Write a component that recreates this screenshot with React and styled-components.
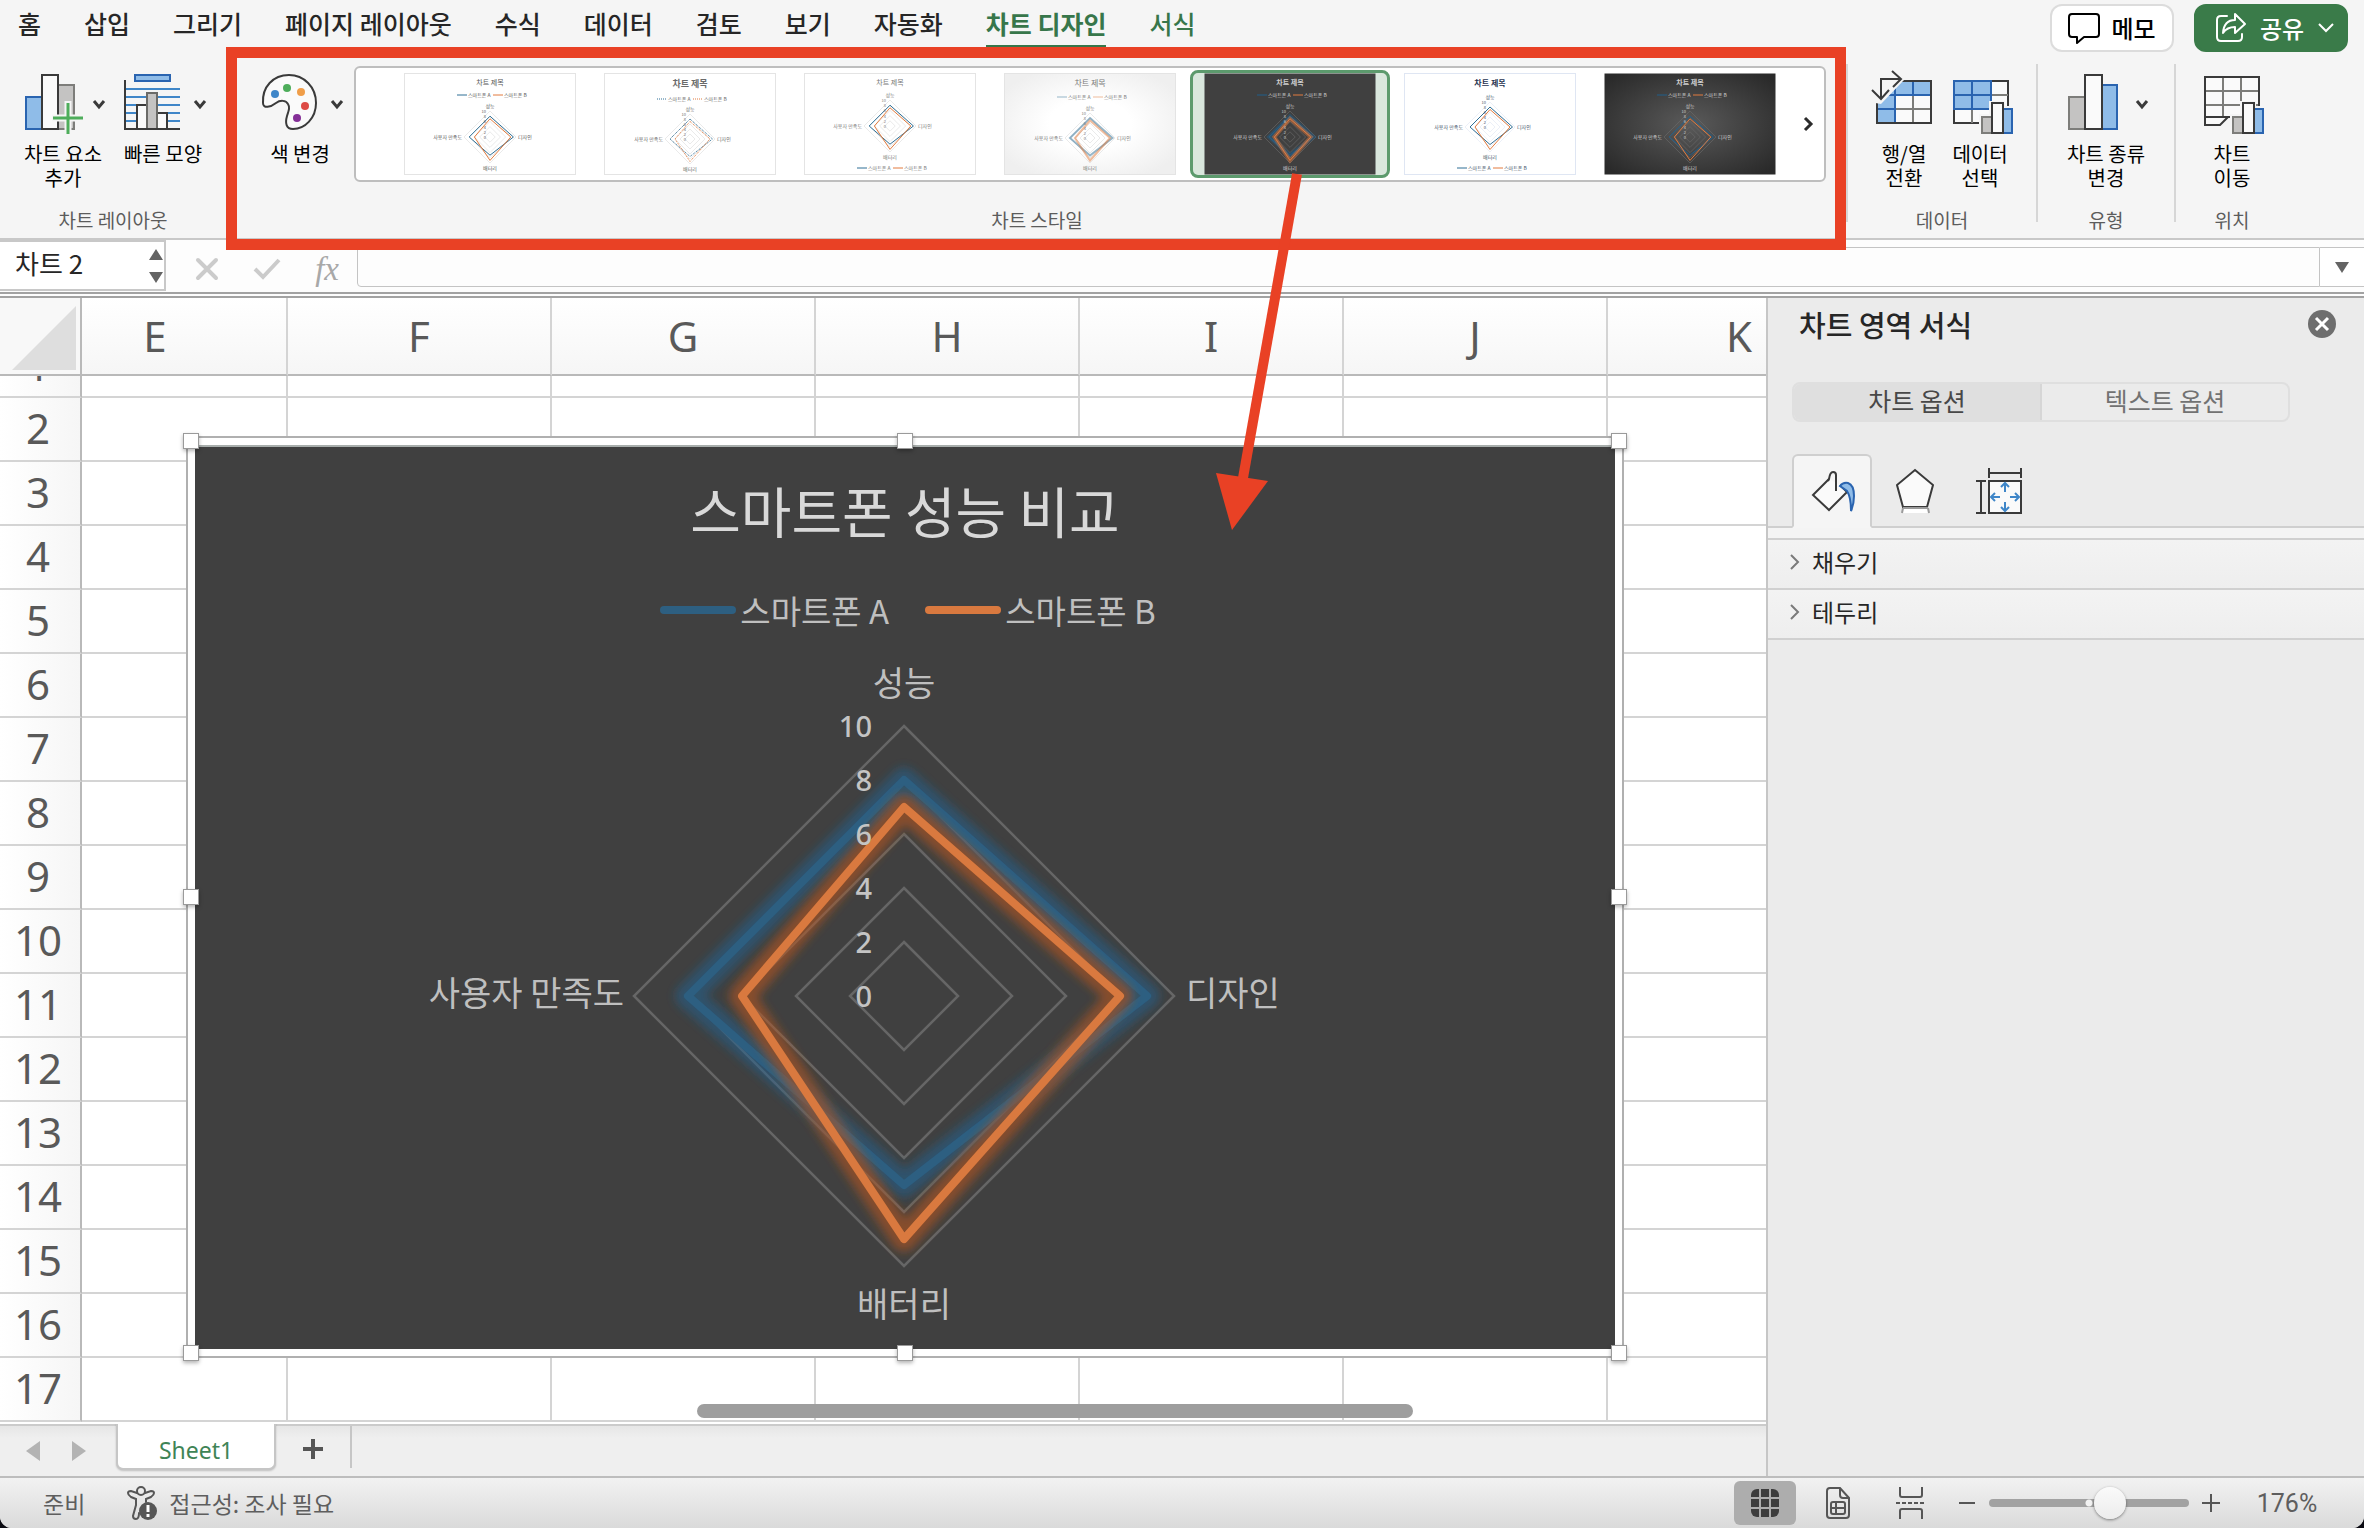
import React, { useState } from 'react';
import styled, { createGlobalStyle, css } from 'styled-components';

const GlobalStyle = createGlobalStyle`
    * {
        box-sizing: border-box;
    }

    body {
        margin: 0;
        background: #0b0b12;
        font-family: 'Noto Sans CJK KR', 'Noto Sans', sans-serif;
        color: #262626;
    }

    button,
    input {
        font: inherit;
        color: inherit;
    }

    button {
        padding: 0;
        border: 0;
        background: none;
        cursor: pointer;
    }

    svg {
        display: block;
        overflow: visible;
        flex: none;
    }
`;

const Window = styled.div`
    display: flex;
    flex-direction: column;
    height: 100vh;
    min-width: 1700px;
    overflow: hidden;
    background: #f5f5f5;
    border-radius: 0 0 12px 12px;
`;

/* top bar */

const TopBar = styled.header`
    display: flex;
    justify-content: space-between;
    height: 56px;
    flex: none;
`;

const Tabs = styled.nav`
    display: flex;
    gap: 43px;
    height: 48px;
    padding-left: 18px;
`;

const Tab = styled.a`
    height: 48px;
    padding-top: 5px;
    font-size: 25px;
    line-height: 36px;
    font-weight: ${({ $active }) => ($active ? 700 : 500)};
    color: ${({ $green }) => ($green ? '#37764a' : '#262626')};
    border-bottom: 3px solid ${({ $active }) => ($active ? '#37764a' : 'transparent')};
    text-decoration: none;
    white-space: nowrap;
`;

const Actions = styled.div`
    display: flex;
    gap: 20px;
    padding: 4px 16px 0 0;
`;

const PillButton = styled.button`
    display: flex;
    align-items: center;
    justify-content: center;
    gap: 11px;
    width: ${({ $primary }) => ($primary ? 154 : 124)}px;
    height: 48px;
    border-radius: 12px;
    font-size: 24px;
    line-height: 36px;
    font-weight: 500;
    color: #000;
    background: #fff;
    border: 2px solid #dcdcdc;

    ${({ $primary }) =>
        $primary &&
        css`
            gap: 14px;
            padding-left: 8px;
            color: #fff;
            background: #3a7b49;
            border-color: #3a7b49;
        `}
`;

/* ribbon */

const Ribbon = styled.section`
    display: flex;
    flex: none;
    height: 184px;
    padding-right: 76px;
    border-bottom: 2px solid #c8c8c8;
`;

const Group = styled.div`
    position: relative;
    display: flex;
    flex-direction: column;
    justify-content: space-between;
    width: ${({ $width }) => $width}px;
    flex: ${({ $grow }) => ($grow ? '1 1 0' : 'none')};
    min-width: 0;
    padding: 10px 0 6px;
`;

const GroupItems = styled.div`
    display: flex;
    justify-content: center;
    padding: ${({ $wide }) => ($wide ? '0 20px 0 22px' : 0)};
`;

const GroupLabel = styled.div`
    font-size: 19px;
    line-height: 24px;
    text-align: center;
    color: #5c5c5c;
`;

const Divider = styled.div`
    width: 2px;
    margin: 8px 0 16px;
    background: #d6d6d6;
`;

const ToolButton = styled.button`
    display: flex;
    flex-direction: column;
    align-items: center;
    gap: 6px;
    width: ${({ $width }) => $width}px;
    padding-top: 6px;
    font-size: 20px;
    line-height: 24px;
    color: #000;
    flex: none;
`;

const ToolIcon = styled.span`
    display: flex;
    align-items: center;
    gap: 10px;
    padding-left: ${({ $menu }) => ($menu ? 4 : 0)}px;
`;

const ToolLabel = styled.span`
    white-space: pre-line;
`;

const Gallery = styled.div`
    display: flex;
    align-items: center;
    justify-content: space-between;
    flex: 1;
    height: 116px;
    padding: 0 4px 0 34px;
    margin-left: 4px;
    background: #fff;
    border: 2px solid #bebebe;
    border-radius: 6px;
`;

const StyleList = styled.div`
    display: flex;
    flex: 1;
    justify-content: space-between;
    max-width: 1400px;
`;

const StyleButton = styled.button`
    display: flex;
    align-items: center;
    justify-content: center;
    width: 200px;
    height: 108px;
    border: 3px solid ${({ $selected }) => ($selected ? '#5c9a6d' : 'transparent')};
    border-radius: 8px;
    background: ${({ $selected }) => ($selected ? '#d9e7dd' : 'transparent')};
`;

const GalleryNext = styled.button`
    display: flex;
    align-items: center;
    justify-content: center;
    width: 24px;
    height: 40px;
`;

const Highlight = styled.div`
    position: absolute;
    z-index: 5;
    top: -9px;
    right: 0;
    bottom: -12px;
    left: -2px;
    border: 11px solid #e94125;
    pointer-events: none;
`;

const PointerArrow = styled.svg`
    position: absolute;
    z-index: 6;
    top: 116px;
    left: 987px;
    pointer-events: none;
`;

/* formula bar */

const FormulaBar = styled.section`
    display: flex;
    flex: none;
    height: 58px;
    background: #fdfdfd;
    border-bottom: 6px double #a2a2a2;
`;

const NameBox = styled.div`
    display: flex;
    width: 166px;
    height: 51px;
    background: #fff;
    border: solid #c8c8c8;
    border-width: 2px 2px 2px 0;

    input {
        flex: 1;
        min-width: 0;
        padding: 0 0 6px 15px;
        border: 0;
        outline: 0;
        background: none;
        font-size: 26px;
    }
`;

const Stepper = styled.button`
    display: flex;
    align-items: center;
    width: 15px;
`;

const FormulaActions = styled.div`
    display: flex;
    align-items: center;
    justify-content: space-between;
    width: 191px;
    padding: 6px 18px 0 30px;
`;

const Fx = styled.button`
    font-family: 'Liberation Serif', serif;
    font-style: italic;
    font-size: 33px;
    line-height: 36px;
    color: #a8a8a8;
`;

const FormulaInput = styled.input`
    flex: 1;
    height: 40px;
    margin-top: 7px;
    padding: 0 12px;
    border: 1px solid #c4c4c4;
    border-bottom-left-radius: 4px;
    outline: 0;
    background: #fdfdfd;
    font-size: 24px;
`;

const ExpandButton = styled.button`
    display: flex;
    align-items: center;
    justify-content: center;
    width: 44px;
    height: 40px;
    margin-top: 7px;
    background: #fff;
    border: solid #c4c4c4;
    border-width: 1px 0;
`;

/* sheet */

const Main = styled.main`
    display: flex;
    flex: 1;
    min-height: 0;
`;

const SheetArea = styled.section`
    display: flex;
    flex-direction: column;
    flex: 1;
    min-width: 0;
`;

const GridViewport = styled.div`
    position: relative;
    flex: 1;
    min-height: 0;
    overflow: hidden;
    background: #fff;
`;

const Grid = styled.table`
    width: 1872px;
    table-layout: fixed;
    border-collapse: separate;
    border-spacing: 0;
    font-family: 'Noto Sans', sans-serif;
    font-size: 42px;
    line-height: 42px;
    color: #595959;

    th,
    td {
        padding: 0;
        border: solid #d4d4d4;
        border-width: 0 2px 2px 0;
    }

    th {
        font-weight: 400;
    }
`;

const ColumnHead = styled.th`
    height: 78px;
    background: linear-gradient(#fff, #f6f6f6);

    && {
        padding-right: ${({ $clipped }) => ($clipped ? 58 : 0)}px;
        border-bottom-color: #b9b9b9;
    }
`;

const Corner = styled.th`
    height: 78px;
    background: #f8f8f8;

    && {
        padding: 8px 4px 4px 12px;
        border-color: #b9b9b9;
    }
`;

const RowHead = styled.th`
    height: 64px;
    background: linear-gradient(90deg, #fff, #f6f6f6);

    && {
        padding: 0 4px 2px 0;
        border-right-color: #b9b9b9;
    }
`;

const ScrolledRowHead = styled(RowHead)`
    height: 22px;

    && {
        padding: 0 4px 0 0;
    }

    div {
        display: flex;
        align-items: flex-end;
        justify-content: center;
        height: 20px;
        padding-bottom: 10px;
        overflow: hidden;
    }
`;

const ChartObject = styled.div`
    position: absolute;
    top: 138px;
    left: 186px;
    width: 1438px;
    height: 922px;
    padding: 7px;
    background: #fff;
    border: 2px solid #b0b0b0;
`;

const ChartArea = styled.div`
    display: flex;
    flex-direction: column;
    align-items: center;
    height: 100%;
    padding-top: 24px;
    background: #404040;
    border-top: 2px solid #a8aeac;
    overflow: hidden;
`;

const Handle = styled.span`
    position: absolute;
    top: ${({ $y }) => $y};
    left: ${({ $x }) => $x};
    width: 16px;
    height: 16px;
    margin: -8px;
    background: #fff;
    border: 1px solid #9a9a9a;
    box-shadow: 0 2px 4px rgba(0, 0, 0, 0.3);
`;

const ChartTitle = styled.h2`
    margin: 0;
    font-size: 55px;
    line-height: 76px;
    font-weight: 400;
    color: #d9d9d9;
`;

const Legend = styled.ul`
    display: flex;
    gap: 36px;
    margin: 41px 0 0;
    padding: 0 0 0 6px;
    list-style: none;
    font-size: 33px;
    line-height: 44px;
    color: #bfbfbf;

    li {
        display: flex;
        align-items: center;
        gap: 4px;
    }
`;

const LegendKey = styled.span`
    width: 76px;
    height: 8px;
    border-radius: 4px;
    background: ${({ $color }) => $color};
`;

const AxisText = styled.text`
    font-size: 34px;
    fill: #bfbfbf;
`;

const ScaleText = styled.text`
    font-family: 'Noto Sans', sans-serif;
    font-size: 29px;
    font-weight: 500;
    text-anchor: end;
    fill: #c4c4c4;
`;

const ScrollThumb = styled.div`
    position: absolute;
    bottom: 6px;
    left: 697px;
    width: 716px;
    height: 14px;
    border-radius: 7px;
    background: #9e9e9e;
`;

const SheetBar = styled.div`
    display: flex;
    flex: none;
    height: 52px;
    border-top: 2px solid #cbcbcb;
    background: linear-gradient(#e6e6e6, #efefef 12px);
`;

const SheetNav = styled.div`
    display: flex;
    align-items: center;
    justify-content: space-between;
    width: 116px;
    padding: 0 30px 0 26px;
`;

const SheetTab = styled.button`
    width: 160px;
    height: 47px;
    margin-top: -3px;
    padding-top: 8px;
    background: #fff;
    border: solid #c6c6c6;
    border-width: 0 2px 2px;
    border-radius: 0 0 7px 7px;
    box-shadow: 0 1px 2px rgba(0, 0, 0, 0.2);
    font-family: 'Noto Sans', sans-serif;
    font-size: 23px;
    color: #3f8456;
`;

const AddSheet = styled.button`
    display: flex;
    align-items: center;
    justify-content: center;
    width: 76px;
    height: 42px;
    padding-top: 4px;
    border-right: 2px solid #c6c6c6;
`;

/* format pane */

const Pane = styled.aside`
    width: 598px;
    flex: none;
    border-left: 2px solid #c6c6c6;
    background: #ebebeb;
`;

const PaneHead = styled.div`
    display: flex;
    justify-content: space-between;
    align-items: center;
    padding: 6px 28px 38px 31px;

    h3 {
        margin: 0;
        font-size: 29px;
        line-height: 40px;
        font-weight: 500;
    }
`;

const CloseButton = styled.button`
    display: flex;
    align-items: center;
    justify-content: center;
    width: 28px;
    height: 28px;
    border-radius: 50%;
    background: #6e6e6e;
`;

const Segments = styled.div`
    display: flex;
    width: 498px;
    height: 40px;
    margin-left: 24px;
    border: 2px solid #dfdfdf;
    border-radius: 8px;
    overflow: hidden;
`;

const Segment = styled.button`
    flex: 1;
    padding-bottom: 4px;
    font-size: 25px;
    line-height: 32px;
    color: ${({ $active }) => ($active ? '#484848' : '#727272')};
    background: ${({ $active }) => ($active ? '#dfdfdf' : 'transparent')};

    & + & {
        border-left: 2px solid #d6d6d6;
    }
`;

const PaneTabs = styled.div`
    display: flex;
    align-items: flex-end;
    height: 106px;
    padding-left: 24px;
    border-bottom: 2px solid #cfcfcf;
`;

const PaneTab = styled.button`
    display: flex;
    align-items: center;
    justify-content: center;
    width: ${({ $active }) => ($active ? 80 : 84)}px;
    height: 74px;
    margin-bottom: -2px;
    padding-left: 2px;
    border: 2px solid transparent;

    ${({ $active }) =>
        $active &&
        css`
            background: #f5f5f5;
            border-color: #cfcfcf #cfcfcf #f5f5f5;
            border-radius: 6px 6px 0 0;
        `}
`;

const Sections = styled.div`
    padding-top: 10px;
    background: #f4f4f4;
`;

const SectionButton = styled.button`
    display: flex;
    align-items: center;
    gap: 12px;
    width: 100%;
    height: 50px;
    padding: 0 0 4px 22px;
    border-top: 2px solid #d0d0d0;
    background: linear-gradient(#f3f3f3, #eeeeee);
    font-size: 24px;
    line-height: 36px;

    &:last-child {
        height: 52px;
        border-bottom: 2px solid #d0d0d0;
    }
`;

/* status bar */

const StatusBar = styled.footer`
    display: flex;
    align-items: center;
    justify-content: space-between;
    flex: none;
    height: 52px;
    padding: 0 46px 0 43px;
    border-top: 2px solid #bdbdbd;
    background: linear-gradient(#f2f2f2, #dadada);
    font-size: 23px;
    line-height: 32px;
    color: #5e5e5e;
`;

const StatusGroup = styled.div`
    display: flex;
    align-items: center;
    gap: ${({ $gap }) => $gap}px;
`;

const ViewButton = styled.button`
    display: flex;
    align-items: center;
    justify-content: center;
    width: 62px;
    height: 44px;
    border-radius: 6px;
    background: ${({ $active }) => ($active ? '#adadad' : 'transparent')};
`;

const ZoomButton = styled.button`
    display: flex;
    align-items: center;
    justify-content: center;
    width: 28px;
    height: 32px;
`;

const ZoomSlider = styled.input`
    width: 200px;
    height: 34px;
    margin: 0;
    appearance: none;
    background: none;

    &::-webkit-slider-runnable-track {
        height: 8px;
        border-radius: 4px;
        background: radial-gradient(circle at 50% 50%, #f2f2f2 3px, #a2a2a2 4px);
    }

    &::-webkit-slider-thumb {
        appearance: none;
        width: 32px;
        height: 32px;
        margin-top: -12px;
        border-radius: 50%;
        background: linear-gradient(#fafafa, #ececec);
        box-shadow: 0 1px 3px rgba(0, 0, 0, 0.45);
    }
`;

const ZoomValue = styled.button`
    width: 62px;
    padding-top: 2px;
    font-family: Roboto, sans-serif;
    font-size: 25px;
    white-space: nowrap;
`;

const BLUE = '#8fbce8';
const BLUE_LINE = '#2a64b0';
const DARK = '#3a3a3a';
const GREY = '#c4c3c2';
const GREY_LINE = '#7d7d7a';

const Chevron = () => (
    <svg width="12" height="9" viewBox="0 0 12 9">
        <path d="M1 1l5 6 5-6" fill="none" stroke={DARK} strokeWidth="3" />
    </svg>
);

const Triangle = ({ direction, width = 14, height = 11, color = '#646464' }) => {
    const points = {
        up: `0,${height} ${width},${height} ${width / 2},0`,
        down: `0,0 ${width},0 ${width / 2},${height}`,
        left: `${width},0 ${width},${height} 0,${height / 2}`,
        right: `0,0 0,${height} ${width},${height / 2}`,
    };

    return (
        <svg width={width} height={height}>
            <polygon points={points[direction]} fill={color} />
        </svg>
    );
};

const AddElementIcon = () => (
    <svg width="58" height="64" strokeWidth="2">
        <rect x="1" y="25" width="16" height="32" fill={BLUE} stroke={BLUE_LINE} />
        <rect x="33" y="13" width="16" height="44" fill={GREY} stroke={GREY_LINE} />
        <rect x="17" y="3" width="16" height="54" fill="#fafafa" stroke={DARK} />
        <path d="M43 29v34M27 46h33" stroke="#f5f5f5" strokeWidth="7" />
        <path d="M43 31v31M28 46h30" stroke="#4ead5b" strokeWidth="3" />
    </svg>
);

const QuickLayoutIcon = () => (
    <svg width="60" height="64" strokeWidth="2" fill="none">
        <rect x="11" y="3" width="35" height="6" fill={BLUE} stroke={BLUE_LINE} />
        <path d="M2 17h54M2 25h54M2 33h54M2 41h54M2 49h54" stroke="#3f86c8" />
        <rect x="13" y="33" width="10" height="24" fill="#fafafa" stroke={DARK} />
        <rect x="33" y="41" width="10" height="16" fill="#fafafa" stroke={DARK} />
        <rect x="23" y="21" width="10" height="36" fill={GREY} stroke="#6b6b68" />
        <path d="M1 8v49h55" stroke={DARK} />
    </svg>
);

const PaletteIcon = () => (
    <svg width="60" height="64">
        <path
            d="M2 31C1 15 12 3 28 3c15 0 27 12 27 28 0 15-11 26-23 26-7 0-8-6-6-13 2-6 3-9 1-12-2-4-8-4-12-1-5 4-13 6-13 0z"
            fill="#fafafa"
            stroke={DARK}
            strokeWidth="2"
        />
        <circle cx="14" cy="22" r="4" fill="#3f86c8" />
        <circle cx="26" cy="16" r="4" fill="#4ead5b" />
        <circle cx="40" cy="20" r="4" fill="#f09e49" />
        <circle cx="44" cy="34" r="4" fill="#dd4a45" />
        <circle cx="36" cy="46" r="4" fill="#842f97" />
    </svg>
);

const SmallBars = () => (
    <g strokeWidth="2">
        <path d="M26 42h10V29h16v5h11v30H26z" fill="#f5f5f5" />
        <rect x="29" y="45" width="10" height="16" fill={GREY} stroke={GREY_LINE} />
        <rect x="50" y="37" width="9" height="24" fill={BLUE} stroke={BLUE_LINE} />
        <rect x="39" y="31" width="11" height="30" fill="#fafafa" stroke={DARK} />
    </g>
);

const SwitchIcon = () => (
    <svg width="64" height="64" strokeWidth="2" fill="none">
        <rect x="5" y="9" width="54" height="42" fill="#fafafa" />
        <path d="M5 9h54v14H23v28H5z" fill={BLUE} />
        <path d="M41 23v28M23 37h36" stroke={GREY_LINE} />
        <path d="M23 9v42M41 9v14M5 23h54M5 37h18" stroke={BLUE_LINE} />
        <path d="M5 9h54v42H5z" stroke={DARK} />
        <path d="M-2 30V-2h34v10L9 32z" fill="#f5f5f5" />
        <path d="M9 27V7h20M20-1l9 8-8 8M0 18l9 9 8-9" stroke={DARK} />
    </svg>
);

const SelectDataIcon = () => (
    <svg width="54" height="64" strokeWidth="2" fill="none">
        <rect x="1" y="9" width="54" height="42" fill="#fafafa" stroke={DARK} />
        <path d="M38 23h17M19 37v14M38 37h17" stroke={GREY_LINE} />
        <rect x="1" y="9" width="37" height="28" fill={BLUE} stroke={BLUE_LINE} />
        <path d="M19 9v28M1 23h37" stroke={BLUE_LINE} />
        <SmallBars />
    </svg>
);

const ChartTypeIcon = () => (
    <svg width="58" height="64" strokeWidth="2">
        <rect x="1" y="25" width="16" height="32" fill={GREY} stroke={GREY_LINE} />
        <rect x="34" y="13" width="15" height="44" fill={BLUE} stroke={BLUE_LINE} />
        <rect x="17" y="3" width="17" height="54" fill="#fafafa" stroke={DARK} />
    </svg>
);

const MoveChartIcon = () => (
    <svg width="56" height="64" strokeWidth="2" fill="none">
        <path d="M1 5h54v40H25l-8 8H1z" fill="#fafafa" />
        <path d="M19 5v40M37 5v40M1 19h54M1 33h54" stroke={GREY_LINE} />
        <path d="M55 34V5H1v48h15l8-8M1 45h25" stroke={DARK} />
        <SmallBars />
    </svg>
);

const MemoIcon = () => (
    <svg width="32" height="32" fill="none" stroke="#000" strokeWidth="2">
        <path d="M4 2h24q3 0 3 3v17q0 3-3 3H16l-7 6v-6H4q-3 0-3-3V5q0-3 3-3z" strokeLinejoin="round" />
    </svg>
);

const ShareIcon = () => (
    <svg width="30" height="30" fill="none" stroke="#fff" strokeWidth="2" strokeLinejoin="round" strokeLinecap="round">
        <path d="M11 3H5Q1 3 1 7v17q0 4 4 4h17q4 0 4-4v-3" />
        <path d="M19 1l10 10-10 9v-6q-8 0-12 6 1-13 12-13z" />
    </svg>
);

const CATEGORIES = ['성능', '디자인', '배터리', '사용자 만족도'];
const SERIES = [
    { name: '스마트폰 A', color: '#2d5f81', values: [8, 9, 7, 8] },
    { name: '스마트폰 B', color: '#d9793f', values: [7, 8, 9, 6] },
];

const diamond = (cx, cy, unit, [top, right, bottom, left]) =>
    `${cx},${cy - top * unit} ${cx + right * unit},${cy} ${cx},${cy + bottom * unit} ${cx - left * unit},${cy}`;

const ring = (cx, cy, unit, n) => diamond(cx, cy, unit, [n, n, n, n]);

const RadarChart = () => {
    const cx = 709;
    const cy = 364;
    const unit = 27;

    return (
        <svg width="100%" height="718" viewBox="0 0 1420 718">
            <defs>
                <filter id="glow" x="-20%" y="-20%" width="140%" height="140%">
                    <feGaussianBlur stdDeviation="5" />
                </filter>
            </defs>
            {[2, 4, 6, 8, 10].map(n => (
                <polygon key={n} points={ring(cx, cy, unit, n)} fill="none" stroke="#666" strokeWidth="2.5" />
            ))}
            {SERIES.map(({ name, color, values }, i) => (
                <g key={name} fill="none" strokeLinejoin="round">
                    <polygon
                        points={diamond(cx, cy, unit, values)}
                        stroke={i ? '#b4571f' : '#22618f'}
                        strokeOpacity={i ? 0.6 : 0.55}
                        strokeWidth="25"
                        filter="url(#glow)"
                    />
                    <polygon points={diamond(cx, cy, unit, values)} stroke={color} strokeWidth="8" />
                </g>
            ))}
            {[0, 2, 4, 6, 8, 10].map(n => (
                <ScaleText key={n} x={cx - 32} y={cy + 11 - n * unit}>
                    {n}
                </ScaleText>
            ))}
            <AxisText x={cx} y="64" textAnchor="middle">
                {CATEGORIES[0]}
            </AxisText>
            <AxisText x={cx + 282} y="374">
                {CATEGORIES[1]}
            </AxisText>
            <AxisText x={cx} y="685" textAnchor="middle">
                {CATEGORIES[2]}
            </AxisText>
            <AxisText x={cx - 280} y="374" textAnchor="end">
                {CATEGORIES[3]}
            </AxisText>
        </svg>
    );
};

const CHART_STYLES = [
    { bg: '#fff', text: '#595959', titleY: 12, title: 7, legendY: 22, cy: 64, unit: 2.6 },
    { bg: '#fff', text: '#6a6a6a', titleY: 14, title: 9, bold: true, legendY: 26, cy: 66, unit: 2.5, dash: '1 1' },
    { bg: '#fff', text: '#7a7a7a', titleY: 12, title: 7, legendY: 95, cy: 53, unit: 2.6 },
    { bg: 'url(#lightShade)', text: '#7a7a7a', titleY: 13, title: 8, legendY: 24, cy: 65, unit: 2.5, line: 2, fade: 0.5 },
    { bg: '#404040', text: '#d0d0d0', titleY: 12, title: 7, bold: true, legendY: 22, cy: 64, unit: 2.6, dark: true, glow: true },
    { bg: '#fff', text: '#44546a', titleColor: '#1f3350', titleY: 13, title: 8, bold: true, legendY: 95, cy: 54, unit: 2.5, border: '#dfe6f3' },
    { bg: 'url(#darkShade)', text: '#d0d0d0', titleY: 12, title: 7, bold: true, legendY: 22, cy: 64, unit: 2.6, dark: true },
];

const StyleThumb = ({ look }) => {
    const { bg, text, titleColor, titleY, title, bold, legendY, cy, unit, dash, fade = 1, dark, glow } = look;
    const cx = 86;
    const radius = unit * 10;
    const colors = [dark ? '#1f5f8b' : '#2f6f95', '#e27b3e'];

    return (
        <svg width="172" height="102" fontSize="5" fill={text}>
            <defs>
                <radialGradient id="lightShade" r="0.6">
                    <stop offset="0.4" stopColor="#fff" />
                    <stop offset="1" stopColor="#efefef" />
                </radialGradient>
                <radialGradient id="darkShade" r="0.65">
                    <stop offset="0" stopColor="#5a5a5a" />
                    <stop offset="1" stopColor="#2a2a2a" />
                </radialGradient>
            </defs>
            <rect x="0.5" y="0.5" width="171" height="101" fill={bg} stroke={dark ? 'none' : look.border || '#e4e4e4'} />
            <text x={cx} y={titleY} fontSize={title} fontWeight={bold ? 700 : 400} fill={titleColor || text} textAnchor="middle">
                차트 제목
            </text>
            {SERIES.map(({ name }, i) => (
                <g key={name}>
                    <path
                        d={`M${53 + i * 36} ${legendY}h10`}
                        stroke={colors[i]}
                        strokeOpacity={fade}
                        strokeDasharray={dash}
                    />
                    <text x={64 + i * 36} y={legendY + 2}>
                        {name}
                    </text>
                </g>
            ))}
            {[2, 4, 6, 8, 10].map(n => (
                <polygon
                    key={n}
                    points={ring(cx, cy, unit, n)}
                    fill="none"
                    stroke={dark ? '#6c6c6c' : look.border || '#dcdcdc'}
                    strokeWidth="0.6"
                />
            ))}
            {SERIES.map(({ name, values }, i) => (
                <g key={name} fill="none" stroke={colors[i]}>
                    {glow && <polygon points={diamond(cx, cy, unit, values)} strokeOpacity="0.45" strokeWidth="4" />}
                    <polygon
                        points={diamond(cx, cy, unit, values)}
                        strokeWidth={look.line || 1}
                        strokeOpacity={fade}
                        strokeDasharray={dash}
                    />
                </g>
            ))}
            {[0, 2, 4, 6, 8, 10].map(n => (
                <text key={n} x={cx - 4} y={cy + 2 - n * unit} textAnchor="end" fontSize="4">
                    {n}
                </text>
            ))}
            <text x={cx} y={cy - radius - 3} textAnchor="middle">
                {CATEGORIES[0]}
            </text>
            <text x={cx + radius + 2} y={cy + 2}>
                {CATEGORIES[1]}
            </text>
            <text x={cx} y={cy + radius + 7} textAnchor="middle">
                {CATEGORIES[2]}
            </text>
            <text x={cx - radius - 2} y={cy + 2} textAnchor="end">
                {CATEGORIES[3]}
            </text>
        </svg>
    );
};

const Tool = ({ icon, label, width, menu }) => (
    <ToolButton $width={width}>
        <ToolIcon $menu={menu}>
            {icon}
            {menu && <Chevron />}
        </ToolIcon>
        <ToolLabel>{label}</ToolLabel>
    </ToolButton>
);

const TABS = ['홈', '삽입', '그리기', '페이지 레이아웃', '수식', '데이터', '검토', '보기', '자동화', '차트 디자인', '서식'];
const COLUMNS = ['E', 'F', 'G', 'H', 'I', 'J', 'K'];
const ROWS = Array.from({ length: 17 }, (_, i) => i + 1);
const HANDLES = [
    ['3px', '3px'],
    ['50%', '3px'],
    ['calc(100% - 3px)', '3px'],
    ['3px', '50%'],
    ['calc(100% - 3px)', '50%'],
    ['3px', 'calc(100% - 3px)'],
    ['50%', 'calc(100% - 3px)'],
    ['calc(100% - 3px)', 'calc(100% - 3px)'],
];

const Header = () => (
    <TopBar>
        <Tabs>
            {TABS.map((tab, i) => (
                <Tab key={tab} href="#" $green={i > 8} $active={i === 9}>
                    {tab}
                </Tab>
            ))}
        </Tabs>
        <Actions>
            <PillButton>
                <MemoIcon />
                메모
            </PillButton>
            <PillButton $primary>
                <ShareIcon />
                공유
                <svg width="16" height="10" fill="none" stroke="#fff" strokeWidth="2">
                    <path d="M1 1l7 7 7-7" />
                </svg>
            </PillButton>
        </Actions>
    </TopBar>
);

const ChartRibbon = ({ selected, onSelect }) => (
    <Ribbon>
        <Group $width={226}>
            <GroupItems>
                <Tool width={100} icon={<AddElementIcon />} label={'차트 요소\n추가'} menu />
                <Tool width={100} icon={<QuickLayoutIcon />} label="빠른 모양" menu />
            </GroupItems>
            <GroupLabel>차트 레이아웃</GroupLabel>
        </Group>
        <Divider />
        <Group $grow>
            <GroupItems $wide>
                <Tool width={100} icon={<PaletteIcon />} label="색 변경" menu />
                <Gallery>
                    <StyleList>
                        {CHART_STYLES.map((look, i) => (
                            <StyleButton
                                key={i}
                                aria-label={`스타일 ${i + 1}`}
                                $selected={i === selected}
                                onClick={() => onSelect(i)}
                            >
                                <StyleThumb look={look} />
                            </StyleButton>
                        ))}
                    </StyleList>
                    <GalleryNext aria-label="다음">
                        <svg width="9" height="14" fill="none" stroke="#2b2b2b" strokeWidth="3">
                            <path d="M1 1l6 6-6 6" />
                        </svg>
                    </GalleryNext>
                </Gallery>
            </GroupItems>
            <GroupLabel>차트 스타일</GroupLabel>
            <Highlight />
            <PointerArrow width="56" height="360">
                <path d="M82 2L28 306" stroke="#e94125" strokeWidth="10" />
                <polygon points="1,301 53,309 17,358" fill="#e94125" />
            </PointerArrow>
        </Group>
        <Divider />
        <Group $width={188}>
            <GroupItems>
                <Tool width={76} icon={<SwitchIcon />} label={'행/열\n전환'} />
                <Tool width={76} icon={<SelectDataIcon />} label={'데이터\n선택'} />
            </GroupItems>
            <GroupLabel>데이터</GroupLabel>
        </Group>
        <Divider />
        <Group $width={136}>
            <GroupItems>
                <Tool width={120} icon={<ChartTypeIcon />} label={'차트 종류\n변경'} menu />
            </GroupItems>
            <GroupLabel>유형</GroupLabel>
        </Group>
        <Divider />
        <Group $width={112}>
            <GroupItems>
                <Tool width={76} icon={<MoveChartIcon />} label={'차트\n이동'} />
            </GroupItems>
            <GroupLabel>위치</GroupLabel>
        </Group>
    </Ribbon>
);

const Formula = () => (
    <FormulaBar>
        <NameBox>
            <input aria-label="이름 상자" defaultValue="차트 2" />
            <Stepper aria-label="이름 목록">
                <svg width="14" height="34">
                    <path d="M0 11L7 0l7 11zM0 23h14l-7 11z" fill="#646464" />
                </svg>
            </Stepper>
        </NameBox>
        <FormulaActions>
            <button aria-label="취소">
                <svg width="22" height="22" stroke="#cbcbcb" strokeWidth="4" strokeLinecap="round">
                    <path d="M2 2l18 18M20 2L2 20" />
                </svg>
            </button>
            <button aria-label="입력">
                <svg width="28" height="22" fill="none" stroke="#cbcbcb" strokeWidth="4">
                    <path d="M2 11l8 8L26 2" />
                </svg>
            </button>
            <Fx>fx</Fx>
        </FormulaActions>
        <FormulaInput aria-label="수식 입력줄" />
        <ExpandButton aria-label="수식 입력줄 확장">
            <Triangle direction="down" />
        </ExpandButton>
    </FormulaBar>
);

const Sheet = () => (
    <SheetArea>
        <GridViewport>
            <Grid>
                <colgroup>
                    <col width="82" />
                    <col width="206" />
                    {COLUMNS.slice(1).map(col => (
                        <col key={col} width="264" />
                    ))}
                </colgroup>
                <thead>
                    <tr>
                        <Corner>
                            <svg width="64" height="64">
                                <polygon points="64,0 64,64 0,64" fill="#dedede" />
                            </svg>
                        </Corner>
                        {COLUMNS.map((col, i) => (
                            <ColumnHead key={col} $clipped={i === 0}>
                                {col}
                            </ColumnHead>
                        ))}
                    </tr>
                </thead>
                <tbody>
                    {ROWS.map(row => (
                        <tr key={row}>
                            {row === 1 ? (
                                <ScrolledRowHead>
                                    <div>{row}</div>
                                </ScrolledRowHead>
                            ) : (
                                <RowHead>{row}</RowHead>
                            )}
                            {COLUMNS.map(col => (
                                <td key={col} />
                            ))}
                        </tr>
                    ))}
                </tbody>
            </Grid>
            <ChartObject>
                <ChartArea>
                    <ChartTitle>스마트폰 성능 비교</ChartTitle>
                    <Legend>
                        {SERIES.map(({ name, color }) => (
                            <li key={name}>
                                <LegendKey $color={color} />
                                {name}
                            </li>
                        ))}
                    </Legend>
                    <RadarChart />
                </ChartArea>
                {HANDLES.map(([x, y]) => (
                    <Handle key={x + y} $x={x} $y={y} />
                ))}
            </ChartObject>
            <ScrollThumb />
        </GridViewport>
        <SheetBar>
            <SheetNav>
                <button aria-label="이전 시트">
                    <Triangle direction="left" height={20} color="#b3b3b3" />
                </button>
                <button aria-label="다음 시트">
                    <Triangle direction="right" height={20} color="#b3b3b3" />
                </button>
            </SheetNav>
            <SheetTab>Sheet1</SheetTab>
            <AddSheet aria-label="새 시트">
                <svg width="20" height="20" stroke="#555" strokeWidth="4">
                    <path d="M10 0v20M0 10h20" />
                </svg>
            </AddSheet>
        </SheetBar>
    </SheetArea>
);

const FormatPane = () => (
    <Pane>
        <PaneHead>
            <h3>차트 영역 서식</h3>
            <CloseButton aria-label="닫기">
                <svg width="14" height="14" stroke="#fff" strokeWidth="3">
                    <path d="M1 1l12 12M13 1L1 13" />
                </svg>
            </CloseButton>
        </PaneHead>
        <Segments>
            <Segment $active>차트 옵션</Segment>
            <Segment>텍스트 옵션</Segment>
        </Segments>
        <PaneTabs>
            <PaneTab $active aria-label="채우기 및 선">
                <svg width="44" height="40" fill="none" strokeWidth="2">
                    <path d="M18 8L2 24l16 15 18-18-7-7" fill="#fafafa" stroke={DARK} />
                    <path d="M25 20V4q0-3-3-3t-4 7L17 10" stroke={DARK} />
                    <path d="M29 15q3-4 8-3 6 2 6 13 0 8-3 15 0-14-4-20z" fill={BLUE} stroke={BLUE_LINE} />
                </svg>
            </PaneTab>
            <PaneTab aria-label="효과">
                <svg width="38" height="44" fill="none" strokeWidth="2">
                    <path d="M19 1l18 15-6 22H7L1 16z" fill="#fafafa" stroke={DARK} />
                    <path d="M8 39h23l2 5H6z" fill="#fff" stroke="none" />
                    <path d="M7 39h25M7 39l-1 5M32 39l1 5" stroke="#9a9a9a" />
                </svg>
            </PaneTab>
            <PaneTab aria-label="크기 및 속성">
                <svg width="46" height="46" fill="none" strokeWidth="2">
                    <rect x="13" y="13" width="32" height="32" fill="#fafafa" stroke={DARK} />
                    <path d="M13 0v10M45 0v10M13 5h32M0 13h10M0 45h10M5 13v32" stroke={DARK} />
                    <path
                        d="M29 15v9M25 19l4-4 4 4M29 43v-9M25 39l4 4 4-4M15 29h9M19 25l-4 4 4 4M43 29h-9M39 25l4 4-4 4"
                        stroke="#3f86c8"
                    />
                </svg>
            </PaneTab>
        </PaneTabs>
        <Sections>
            {['채우기', '테두리'].map(name => (
                <SectionButton key={name}>
                    <svg width="10" height="16" fill="none" stroke="#7a7a7a" strokeWidth="2">
                        <path d="M1 1l7 7-7 7" />
                    </svg>
                    {name}
                </SectionButton>
            ))}
        </Sections>
    </Pane>
);

const Status = () => {
    const [zoom, setZoom] = useState(176);

    return (
        <StatusBar>
            <StatusGroup $gap={42}>
                <span>준비</span>
                <StatusGroup $gap={12}>
                    <svg width="30" height="34" fill="none" stroke="#565656" strokeWidth="2">
                        <circle cx="14" cy="5" r="4" />
                        <path d="M10 7L4 5Q1 5 1 7t3 4l5 2v6L6 30q0 3 3 3t3-6" strokeLinecap="round" />
                        <path d="M18 7l6-2q3 0 3 2t-3 4l-5 2v3" strokeLinecap="round" />
                        <circle cx="21" cy="25" r="9" fill="#565656" stroke="none" />
                        <path d="M21 19v7M21 28v3" stroke="#fff" strokeWidth="3" />
                    </svg>
                    <span>접근성: 조사 필요</span>
                </StatusGroup>
            </StatusGroup>
            <StatusGroup $gap={31}>
                <StatusGroup $gap={11}>
                    <ViewButton $active aria-label="기본 보기">
                        <svg width="28" height="28">
                            <rect width="28" height="28" rx="6" fill="#3d3d3d" />
                            <path d="M9 0v28M19 0v28M0 9h28M0 19h28" stroke="#adadad" strokeWidth="2" />
                        </svg>
                    </ViewButton>
                    <ViewButton aria-label="페이지 레이아웃 보기">
                        <svg width="24" height="32" fill="none" stroke="#565656" strokeWidth="2">
                            <path d="M4 1h10l9 10v17q0 3-3 3H4q-3 0-3-3V4q0-3 3-3zM14 1v7q0 3 3 3h6" />
                            <rect x="5" y="15" width="14" height="12" rx="2" />
                            <path d="M10 15v12M5 21h14" />
                        </svg>
                    </ViewButton>
                    <ViewButton aria-label="페이지 나누기 미리 보기">
                        <svg width="30" height="32" fill="none" stroke="#565656" strokeWidth="2">
                            <path d="M4 0v8q0 2 2 2h18q2 0 2-2V0M4 32v-8q0-2 2-2h18q2 0 2 2v8" />
                            <path d="M0 16h30" strokeDasharray="4 2" />
                        </svg>
                    </ViewButton>
                    <StatusGroup $gap={8}>
                        <ZoomButton aria-label="축소" onClick={() => setZoom(zoom - 10)}>
                            <svg width="16" height="2">
                                <rect width="16" height="2" fill="#565656" />
                            </svg>
                        </ZoomButton>
                        <ZoomSlider
                            type="range"
                            min="10"
                            max="276"
                            aria-label="확대/축소"
                            value={zoom}
                            onChange={e => setZoom(Number(e.target.value))}
                        />
                        <ZoomButton aria-label="확대" onClick={() => setZoom(zoom + 10)}>
                            <svg width="18" height="18" stroke="#565656" strokeWidth="2">
                                <path d="M9 0v18M0 9h18" />
                            </svg>
                        </ZoomButton>
                    </StatusGroup>
                </StatusGroup>
                <ZoomValue>{zoom}%</ZoomValue>
            </StatusGroup>
        </StatusBar>
    );
};

const App = () => {
    const [selected, setSelected] = useState(4);

    return (
        <Window>
            <GlobalStyle />
            <Header />
            <ChartRibbon selected={selected} onSelect={setSelected} />
            <Formula />
            <Main>
                <Sheet />
                <FormatPane />
            </Main>
            <Status />
        </Window>
    );
};

export default App;
